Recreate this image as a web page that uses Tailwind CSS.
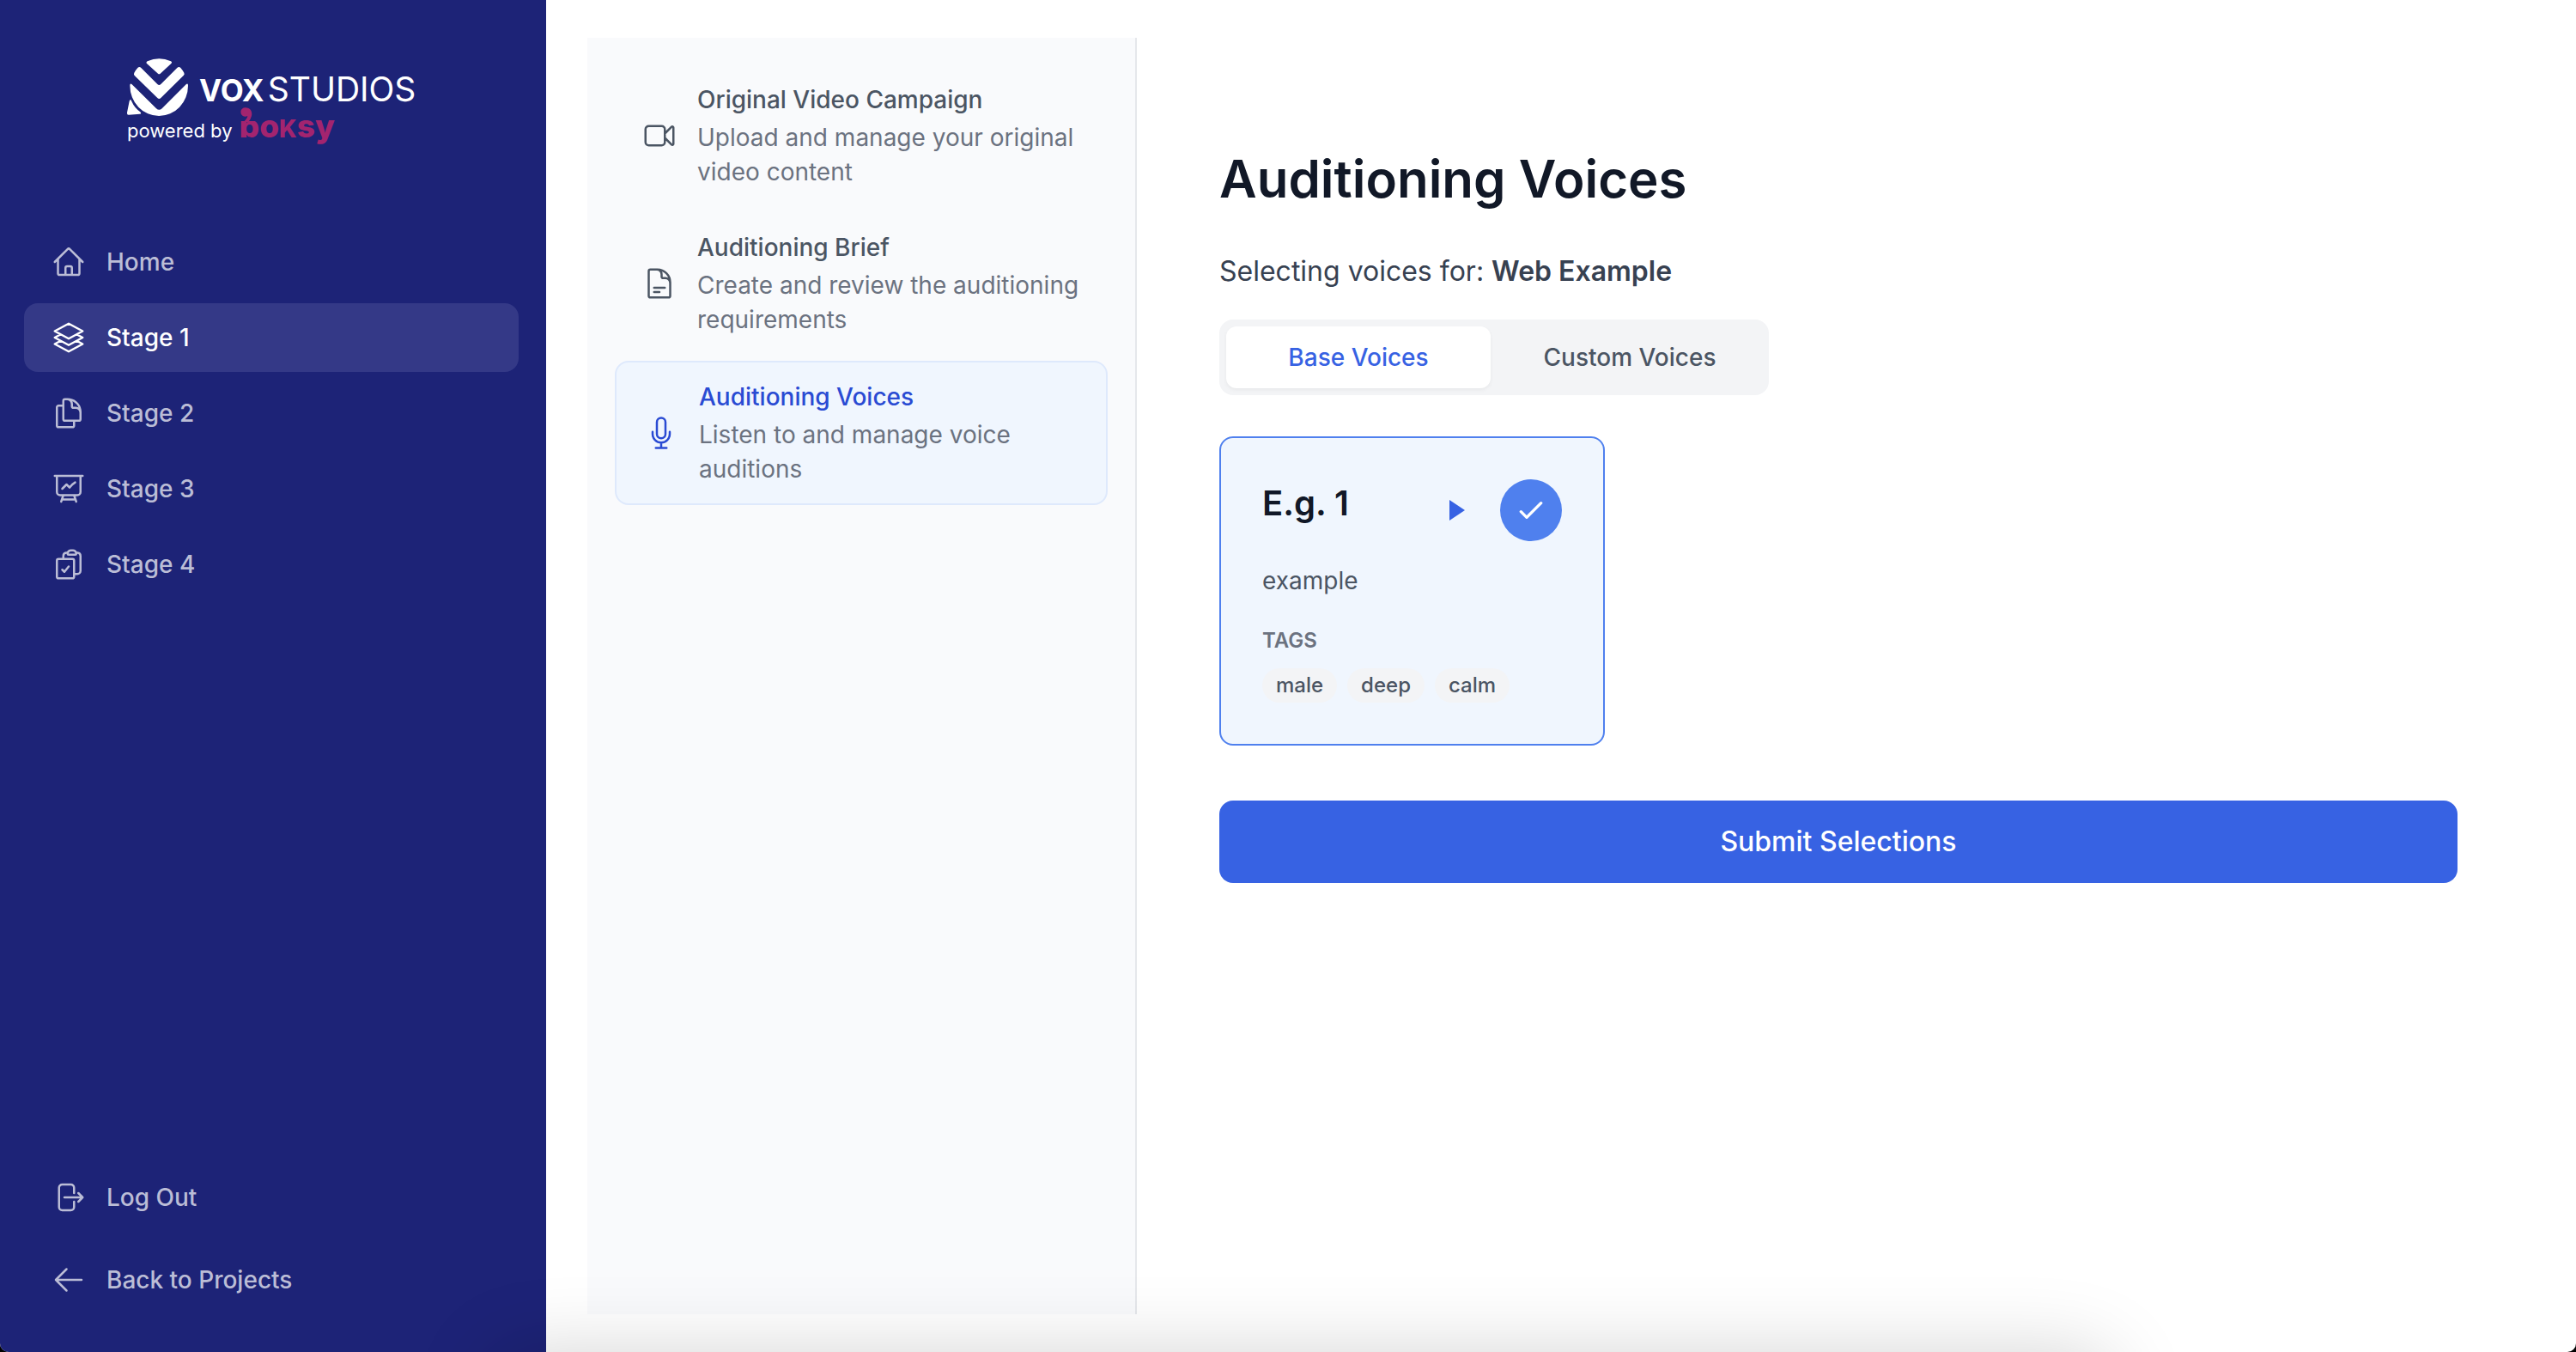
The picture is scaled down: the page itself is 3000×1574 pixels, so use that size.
<!DOCTYPE html>
<html lang="en">
<head>
<meta charset="utf-8">
<meta name="viewport" content="width=device-width, initial-scale=1">
<title>Auditioning Voices - Vox Studios</title>
<script src="https://cdn.jsdelivr.net/npm/@tailwindcss/browser@4"></script>
</head>
<body class="bg-black font-['Inter',sans-serif] text-[28px] leading-10 antialiased">
<div class="flex min-h-screen overflow-hidden rounded-b-[10px] bg-white">

  <aside class="flex w-[636px] shrink-0 flex-col bg-[#1d2377] pr-8 pl-7 pt-[67px] pb-11 font-medium text-[#bbbdd6]">
    <div class="mx-auto w-[336px] text-white">
      <div class="flex h-[70px] items-center gap-3">
        <svg class="h-[70px] w-[72px] shrink-0" viewBox="54 50 216 210" fill="currentColor" aria-hidden="true">
          <path d="M125 63Q166 44 207 63Q213 67 208 71L170 106Q166 109 162 106L123 71Q119 67 125 63Z"/>
          <path d="M91 86Q97 80 103 86L160 143Q166 149 172 143L229 86Q235 80 241 86Q248 94 253 103Q256 108 251 113L172 191Q166 197 160 191L80 113Q76 108 79 103Q84 94 91 86Z"/>
          <path d="M64 148Q64 138 71 144L156 228Q166 237 176 228L260 144Q267 138 267 148A101.500 106 0 0 1 64 148Z"/>
          <path d="M62 202Q66 192 70 203Q80 226 100 240Q106 247 98 247L60 250Q53 250 54 242Z"/>
        </svg>
        <div class="flex items-baseline gap-1 pt-1 whitespace-nowrap">
          <span class="text-[35px] font-bold">VOX</span>
          <span class="text-[39px] font-normal">STUDIOS</span>
        </div>
      </div>
      <div class="flex h-8 items-baseline gap-2 font-normal leading-5">
        <span class="text-[22px]">powered by</span>
        <span class="relative flex items-baseline text-[37px] font-extrabold text-[#a3246f]">
          <span class="[clip-path:inset(4px_0_-8px_0)]">b</span><span>o</span><span class="text-[28px]">K</span><span>sy</span>
          <svg class="absolute -top-3 left-0 h-[20px] w-[16px]" viewBox="448 232 48 60" fill="currentColor" aria-hidden="true"><path d="M452 248A16 15 0 0 1 468 233C486 233 494 248 490 262Q487 274 478 284L460 284Q474 274 476 262A16 15 0 0 1 452 248Z"/></svg>
        </span>
      </div>
    </div>

    <nav class="mt-24 flex flex-col gap-2" aria-label="Stages">
      <a href="#" class="flex items-center gap-6 rounded-2xl px-8 py-5">
        <svg class="size-10" fill="none" viewBox="0 0 24 24" stroke="currentColor" stroke-width="1.5" stroke-linecap="round" stroke-linejoin="round"><path d="m2.25 12 8.954-8.955c.44-.439 1.152-.439 1.591 0L21.750 12M4.500 9.750v10.125c0 .621.504 1.125 1.125 1.125H9.750v-4.875c0-.621.504-1.125 1.125-1.125h2.250c.621 0 1.125.504 1.125 1.125V21h4.125c.621 0 1.125-.504 1.125-1.125V9.750M8.250 21h8.250"/></svg>
        Home</a>
      <a href="#" aria-current="page" class="flex items-center gap-6 rounded-2xl bg-[#343987] px-8 py-5 text-white">
        <svg class="size-10" fill="none" viewBox="0 0 24 24" stroke="currentColor" stroke-width="1.5" stroke-linecap="round" stroke-linejoin="round"><path d="M6.429 9.750 2.250 12l4.179 2.250m0-4.500 5.571 3 5.571-3m-11.142 0L2.250 7.500 12 2.250l9.750 5.250-4.179 2.250m0 0L21.750 12l-4.179 2.250m0 0 4.179 2.250L12 21.750 2.250 16.500l4.179-2.250m11.142 0-5.571 3-5.571-3"/></svg>
        Stage 1</a>
      <a href="#" class="flex items-center gap-6 rounded-2xl px-8 py-5">
        <svg class="size-10" fill="none" viewBox="0 0 24 24" stroke="currentColor" stroke-width="1.5" stroke-linecap="round" stroke-linejoin="round"><path d="M15.750 17.250v3.375c0 .621-.504 1.125-1.125 1.125h-9.750a1.125 1.125 0 0 1-1.125-1.125V7.875c0-.621.504-1.125 1.125-1.125H6.750a9.060 9.060 0 0 1 1.500.124m7.500 10.376h3.375c.621 0 1.125-.504 1.125-1.125V11.250c0-4.460-3.243-8.161-7.500-8.876a9.060 9.060 0 0 0-1.500-.124H9.375c-.621 0-1.125.504-1.125 1.125v3.500m7.500 10.375H9.375a1.125 1.125 0 0 1-1.125-1.125v-9.250m12 6.625v-1.875a3.375 3.375 0 0 0-3.375-3.375h-1.500a1.125 1.125 0 0 1-1.125-1.125v-1.500a3.375 3.375 0 0 0-3.375-3.375H9.750"/></svg>
        Stage 2</a>
      <a href="#" class="flex items-center gap-6 rounded-2xl px-8 py-5">
        <svg class="size-10" fill="none" viewBox="0 0 24 24" stroke="currentColor" stroke-width="1.5" stroke-linecap="round" stroke-linejoin="round"><path d="M3.750 3v11.250A2.250 2.250 0 0 0 6 16.500h2.250M3.750 3h-1.500m1.500 0h16.500m0 0h1.500m-1.500 0v11.250A2.250 2.250 0 0 1 18 16.500h-2.250m-7.500 0h7.500m-7.500 0-1 3m8.500-3 1 3m0 0 .5 1.500m-.5-1.500h-9.500m0 0-.5 1.500m.75-9 3-3 2.148 2.148A12.061 12.061 0 0 1 16.500 7.605"/></svg>
        Stage 3</a>
      <a href="#" class="flex items-center gap-6 rounded-2xl px-8 py-5">
        <svg class="size-10" fill="none" viewBox="0 0 24 24" stroke="currentColor" stroke-width="1.5" stroke-linecap="round" stroke-linejoin="round"><path d="M11.350 3.836c-.065.210-.1.433-.1.664 0 .414.336.750.750.750h4.500a.75.75 0 0 0 .750-.750 2.250 2.250 0 0 0-.1-.664m-5.800 0A2.251 2.251 0 0 1 13.500 2.250H15c1.012 0 1.867.668 2.150 1.586m-5.800 0c-.376.023-.750.050-1.124.080C9.095 4.010 8.250 4.973 8.250 6.108V8.250m8.900-4.414c.376.023.750.050 1.124.080 1.131.094 1.976 1.057 1.976 2.192V16.500A2.250 2.250 0 0 1 18 18.750h-2.250m-7.500-10.500H4.875c-.621 0-1.125.504-1.125 1.125v11.250c0 .621.504 1.125 1.125 1.125h9.750c.621 0 1.125-.504 1.125-1.125V18.750m-7.500-10.500h6.375c.621 0 1.125.504 1.125 1.125v9.375m-8.250-3 1.500 1.500 3-3.750"/></svg>
        Stage 4</a>
    </nav>

    <div class="mt-auto flex flex-col gap-4">
      <button type="button" class="flex items-center gap-6 rounded-2xl px-8 py-5">
        <svg class="size-10" fill="none" viewBox="0 0 24 24" stroke="currentColor" stroke-width="1.5" stroke-linecap="round" stroke-linejoin="round"><path d="M15.750 9V5.250A2.250 2.250 0 0 0 13.500 3h-6a2.250 2.250 0 0 0-2.250 2.250v13.500A2.250 2.250 0 0 0 7.500 21h6a2.250 2.250 0 0 0 2.250-2.250V15m3 0 3-3m0 0-3-3m3 3H9"/></svg>
        Log Out</button>
      <a href="#" class="flex items-center gap-6 rounded-2xl px-8 py-5">
        <svg class="size-10" fill="none" viewBox="0 0 24 24" stroke="currentColor" stroke-width="1.5" stroke-linecap="round" stroke-linejoin="round"><path d="M10.500 19.500 3 12m0 0 7.500-7.500M3 12h18"/></svg>
        Back to Projects</a>
    </div>
  </aside>

  <div class="flex grow py-11 pl-12">
    <nav class="flex w-[640px] shrink-0 flex-col gap-2 border-r-2 border-gray-200 bg-[#f9fafc] p-8 text-[#4b5563]" aria-label="Steps">
      <a href="#" class="flex items-center gap-6 rounded-2xl px-8 py-5">
        <svg class="size-10 shrink-0" fill="none" viewBox="0 0 24 24" stroke="currentColor" stroke-width="1.5" stroke-linecap="round" stroke-linejoin="round"><path d="m15.750 10.500 4.720-4.720a.75.75 0 0 1 1.280.530v11.380a.75.75 0 0 1-1.280.530l-4.720-4.720M4.500 18.750h9a2.250 2.250 0 0 0 2.250-2.250v-9a2.250 2.250 0 0 0-2.250-2.250h-9A2.250 2.250 0 0 0 2.250 7.500v9a2.250 2.250 0 0 0 2.250 2.250Z"/></svg>
        <span class="flex flex-col gap-1"><span class="font-medium">Original Video Campaign</span><span class="text-[#6b7280]">Upload and manage your original video content</span></span>
      </a>
      <a href="#" class="flex items-center gap-6 rounded-2xl px-8 py-5">
        <svg class="size-10 shrink-0" fill="none" viewBox="0 0 24 24" stroke="currentColor" stroke-width="1.5" stroke-linecap="round" stroke-linejoin="round"><path d="M19.500 14.250v-2.625a3.375 3.375 0 0 0-3.375-3.375h-1.500A1.125 1.125 0 0 1 13.500 7.125v-1.500a3.375 3.375 0 0 0-3.375-3.375H8.250m0 12.750h7.500m-7.500 3H12M10.500 2.250H5.625c-.621 0-1.125.504-1.125 1.125v17.250c0 .621.504 1.125 1.125 1.125h12.750c.621 0 1.125-.504 1.125-1.125V11.250a9 9 0 0 0-9-9Z"/></svg>
        <span class="flex flex-col gap-1"><span class="font-medium">Auditioning Brief</span><span class="text-[#6b7280]">Create and review the auditioning requirements</span></span>
      </a>
      <a href="#" aria-current="step" class="flex items-center gap-6 rounded-2xl border-2 border-[#dee9fc] bg-[#f0f6fe] px-8 py-5 text-[#2a4bd3]">
        <svg class="size-10 shrink-0" fill="none" viewBox="0 0 24 24" stroke="currentColor" stroke-width="1.5" stroke-linecap="round" stroke-linejoin="round"><path d="M12 18.750a6 6 0 0 0 6-6v-1.500m-6 7.500a6 6 0 0 1-6-6v-1.500m6 7.500v3.750m-3.750 0h7.500M12 15.750a3 3 0 0 1-3-3V4.500a3 3 0 1 1 6 0v8.250a3 3 0 0 1-3 3Z"/></svg>
        <span class="flex flex-col gap-1"><span class="font-medium">Auditioning Voices</span><span class="text-[#6b7280]">Listen to and manage voice auditions</span></span>
      </a>
    </nav>

    <main class="grow pt-32 pr-[138px] pl-24">
      <h1 class="text-[60px] leading-[72px] font-semibold text-[#111827]">Auditioning Voices</h1>
      <p class="mt-12 text-[32px] leading-[48px] text-[#374151]">Selecting voices for: <strong class="font-semibold">Web Example</strong></p>

      <div class="mt-8 grid w-[640px] grid-cols-2 gap-2 rounded-2xl bg-gray-100 p-2 font-medium">
        <button type="button" class="rounded-xl bg-white py-4 text-[#3762e3] shadow-[0_2px_4px_rgba(0,0,0,0.05)]">Base Voices</button>
        <button type="button" class="rounded-xl py-4 text-[#4b5563]">Custom Voices</button>
      </div>

      <div class="mt-12 grid grid-cols-3 gap-12">
        <article class="rounded-2xl border-2 border-[#4f80ee] bg-[#f0f6fe] p-12">
          <div class="flex items-start gap-4">
            <h2 class="grow text-[40px] leading-[56px] font-semibold text-[#111827]">E.g. 1</h2>
            <button type="button" aria-label="Play" class="flex size-[72px] items-center justify-center rounded-full text-[#3762e3]">
              <svg class="h-6 w-[22px]" viewBox="-4 0 22 24" fill="currentColor"><path d="M0 0 18 12 0 24Z"/></svg>
            </button>
            <button type="button" aria-label="Selected" class="flex size-[72px] items-center justify-center rounded-full bg-[#4f80ee] text-white">
              <svg class="size-10" viewBox="0 0 24 24" fill="none" stroke="currentColor" stroke-width="2" stroke-linecap="round" stroke-linejoin="round"><path d="M5 13l4 4L19 7"/></svg>
            </button>
          </div>
          <p class="mt-6 leading-[44px] text-[#4b5563]">example</p>
          <h3 class="mt-8 text-2xl font-semibold text-[#6b7280]">TAGS</h3>
          <ul class="mt-4 flex gap-3 text-2xl font-medium text-[#4b5563]">
            <li class="rounded-full bg-gray-100 px-4 py-1">male</li>
            <li class="rounded-full bg-gray-100 px-4 py-1">deep</li>
            <li class="rounded-full bg-gray-100 px-4 py-1">calm</li>
          </ul>
        </article>
      </div>

      <button type="button" class="mt-16 w-full rounded-2xl bg-[#3762e3] py-6 text-[32px] leading-[48px] font-medium text-white">Submit Selections</button>
    </main>
  </div>
</div>

<div class="pointer-events-none fixed inset-x-0 bottom-0 h-32 overflow-hidden" aria-hidden="true">
  <div class="absolute top-full right-[18%] left-[19%] h-64 rounded-[40px] shadow-[0_0_90px_rgba(0,0,0,0.17)]"></div>
</div>
</body>
</html>
